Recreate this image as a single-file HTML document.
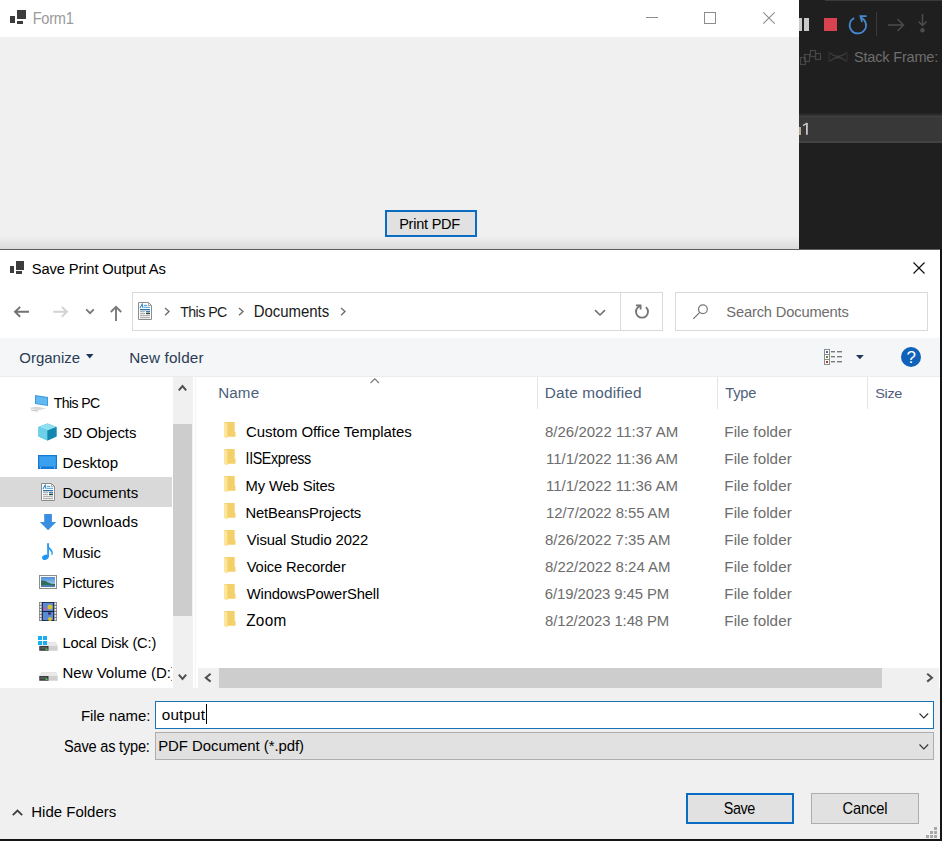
<!DOCTYPE html><html><head><meta charset="utf-8"><style>
html,body{margin:0;padding:0;width:942px;height:841px;overflow:hidden;background:#1e1e1e;}
body{position:relative;font-family:"Liberation Sans",sans-serif;}
.t{position:absolute;white-space:nowrap;line-height:20px;font-family:"Liberation Sans",sans-serif;}
svg{overflow:visible}
</style></head><body>
<div style="position:absolute;left:799px;top:0px;width:143px;height:249px;background:#1f1f1f"></div>
<div style="position:absolute;left:825px;top:0px;width:117px;height:1px;background:#3a3a3a"></div>
<div style="position:absolute;left:799px;top:18px;width:3px;height:13px;background:#c8c8c8"></div>
<div style="position:absolute;left:804px;top:18px;width:5px;height:13px;background:#c8c8c8"></div>
<div style="position:absolute;left:824px;top:18px;width:13px;height:13px;background:#d8434f"></div>
<svg style="position:absolute;left:848px;top:15px" width="20" height="20" viewBox="0 0 20 20"><path d="M12.8 2.6 A8.2 8.2 0 1 1 6.2 2.9" fill="none" stroke="#4489d0" stroke-width="1.7"/><path d="M18.5 1.2 H12.4 L14 7" fill="none" stroke="#4489d0" stroke-width="1.7"/></svg>
<div style="position:absolute;left:876px;top:12px;width:1px;height:24px;background:#3a3a3a"></div>
<svg style="position:absolute;left:886px;top:16px" width="20" height="18" viewBox="0 0 20 18"><path d="M2 9 H17 M11.5 3 L17.5 9 L11.5 15" fill="none" stroke="#4c4c4c" stroke-width="1.5"/></svg>
<svg style="position:absolute;left:914px;top:12px" width="16" height="22" viewBox="0 0 16 22"><path d="M8.5 2 V14 M4.5 9.5 L8.5 13.5 L12.5 9.5" fill="none" stroke="#4c4c4c" stroke-width="1.5"/><circle cx="8.5" cy="18.3" r="2.2" fill="#4c4c4c"/></svg>
<svg style="position:absolute;left:800px;top:48px" width="22" height="18" viewBox="0 0 22 18"><rect x="0.5" y="9.5" width="5" height="7" fill="none" stroke="#454545" stroke-width="1.2"/><rect x="4.5" y="6.5" width="5" height="7" fill="none" stroke="#454545" stroke-width="1.2"/><rect x="10.5" y="2.5" width="5" height="6" fill="none" stroke="#454545" stroke-width="1.2"/><rect x="15.5" y="5.5" width="5" height="6" fill="none" stroke="#454545" stroke-width="1.2"/></svg>
<svg style="position:absolute;left:828px;top:50px" width="20" height="14" viewBox="0 0 20 14"><path d="M2 3 Q10 10 18 3 M2 11 Q10 4 18 11" fill="none" stroke="#3e3e3e" stroke-width="1.3"/><path d="M1 2 L1 12 M19 2 L19 12" stroke="#353535" stroke-width="1"/></svg>
<div class="t" style="left:854.04px;top:46.95px;font-size:14.58px;color:#6e6e6e;letter-spacing:-0.221px;transform:scaleY(1.027);transform-origin:0 15.05px;">Stack Frame:</div>
<div style="position:absolute;left:799px;top:113px;width:143px;height:3px;background:linear-gradient(#222,#353535)"></div>
<div style="position:absolute;left:799px;top:115.5px;width:143px;height:27.5px;background:#424242"></div>
<div style="position:absolute;left:799px;top:117px;width:143px;height:24px;background:#383838"></div>
<svg style="position:absolute;left:802px;top:122px" width="7" height="14" viewBox="0 0 7 14"><path d="M4.9 1 V12.8" stroke="#d0d0d0" stroke-width="1.7"/><path d="M1 3.6 L5.2 1.2" stroke="#c8c8c8" stroke-width="1.4"/></svg>
<div style="position:absolute;left:799px;top:127px;width:2.3px;height:8px;background:#b8ab9a"></div>
<div style="position:absolute;left:0px;top:0px;width:799px;height:249px;background:#f0f0f0;overflow:hidden"></div>
<div style="position:absolute;left:0px;top:0px;width:799px;height:37px;background:#ffffff"></div>
<div style="position:absolute;left:0px;top:236px;width:799px;height:13px;background:linear-gradient(#f0f0f0,#dadada)"></div>
<div style="position:absolute;left:10px;top:15.5px;width:4.5px;height:7.5px;background:#3c3c3c"></div>
<div style="position:absolute;left:17px;top:10px;width:8.5px;height:9px;background:#3c3c3c"></div>
<div style="position:absolute;left:17px;top:20.5px;width:6px;height:3.5px;background:#3c3c3c"></div>
<div class="t" style="left:32.66px;top:8.94px;font-size:14.61px;color:#9a9a9a;letter-spacing:-0.270px;transform:scaleY(1.100);transform-origin:0 15.06px;">Form1</div>
<div style="position:absolute;left:646px;top:17px;width:12px;height:1px;background:#8c8c8c"></div>
<div style="position:absolute;left:704px;top:12px;width:12px;height:12px;border:1px solid #8c8c8c;box-sizing:border-box"></div>
<svg style="position:absolute;left:763px;top:12px" width="12" height="12" viewBox="0 0 12 12"><path d="M0.3 0.3 L11.7 11.7 M11.7 0.3 L0.3 11.7" stroke="#8a8a8a" stroke-width="1.05"/></svg>
<div style="position:absolute;left:385px;top:210px;width:92px;height:27px;background:#e1e1e1;border:2px solid #0a6cc2;box-sizing:border-box"></div>
<div class="t" style="left:399.16px;top:213.96px;font-size:14.54px;color:#000;letter-spacing:-0.240px;transform:scaleY(0.983);transform-origin:0 15.04px;">Print PDF</div>
<div style="position:absolute;left:0px;top:249px;width:942px;height:1px;background:#5f5f5f"></div>
<div style="position:absolute;left:0px;top:250px;width:940px;height:589px;background:#f0f0f0"></div>
<div style="position:absolute;left:940px;top:249px;width:2px;height:592px;background:#151515"></div>
<div style="position:absolute;left:0px;top:839px;width:942px;height:2px;background:#151515"></div>
<div style="position:absolute;left:0px;top:250px;width:940px;height:88px;background:#ffffff"></div>
<div style="position:absolute;left:9.5px;top:265.5px;width:4px;height:7px;background:#3c3c3c"></div>
<div style="position:absolute;left:16px;top:260.5px;width:8.2px;height:9px;background:#3c3c3c"></div>
<div style="position:absolute;left:16px;top:270.5px;width:6px;height:3.3px;background:#3c3c3c"></div>
<div class="t" style="left:31.74px;top:258.69px;font-size:14.73px;color:#000;letter-spacing:-0.130px;transform:scaleY(0.980);transform-origin:0 15.11px;">Save Print Output As</div>
<svg style="position:absolute;left:913px;top:262px" width="12" height="12" viewBox="0 0 12 12"><path d="M0.5 0.5 L11.5 11.5 M11.5 0.5 L0.5 11.5" stroke="#111" stroke-width="1.2"/></svg>
<svg style="position:absolute;left:13px;top:305px" width="17" height="14" viewBox="0 0 17 14"><path d="M16 6.8 H2 M7.2 1.9 L2 6.8 L7.2 11.8" fill="none" stroke="#727272" stroke-width="1.9"/></svg>
<svg style="position:absolute;left:52px;top:305px" width="17" height="14" viewBox="0 0 17 14"><path d="M1.2 6.8 H15 M9.8 1.9 L15 6.8 L9.8 11.8" fill="none" stroke="#d2d2d2" stroke-width="1.9"/></svg>
<svg style="position:absolute;left:85px;top:308px" width="10" height="7" viewBox="0 0 10 7"><path d="M1.2 1.4 L5 5.2 L8.8 1.4" fill="none" stroke="#777" stroke-width="1.8"/></svg>
<svg style="position:absolute;left:109px;top:305px" width="14" height="16" viewBox="0 0 14 16"><path d="M7 2 V16 M1.8 7 L7 1.8 L12.2 7" fill="none" stroke="#7a7a7a" stroke-width="1.9"/></svg>
<div style="position:absolute;left:132px;top:292px;width:531px;height:39px;border:1px solid #d9d9d9;box-sizing:border-box;background:#fff"></div>
<div style="position:absolute;left:620px;top:293px;width:1px;height:37px;background:#d9d9d9"></div>
<svg style="position:absolute;left:138px;top:302px" width="14" height="18" viewBox="0 0 14 18"><path d="M0.5 0.5 H10.5 L13.5 3.5 V17.5 H0.5 Z" fill="#fdfdfd" stroke="#8c8c8c" stroke-width="1"/><path d="M10.5 0.5 V3.5 H13.5" fill="none" stroke="#9a9a9a" stroke-width="0.8"/><path d="M2 6 L4.2 2 L5 6" fill="none" stroke="#2f88cc" stroke-width="1.1"/><rect x="6" y="2.9" width="3.2" height="1" fill="#4aa0d8"/><rect x="6" y="4.8" width="6" height="1" fill="#4aa0d8"/><rect x="2" y="7" width="10" height="1.3" fill="#2a74aa"/><rect x="2" y="9.2" width="5" height="1" fill="#a0a0a0"/><rect x="2" y="11.2" width="5" height="1" fill="#a0a0a0"/><rect x="8" y="9" width="4" height="1.3" fill="#4a78b8"/><rect x="8" y="10.8" width="4" height="1.4" fill="#1e4a30"/><rect x="2" y="13.2" width="10" height="1" fill="#a0a0a0"/><rect x="2" y="15.2" width="10" height="1" fill="#a0a0a0"/></svg>
<svg style="position:absolute;left:164px;top:306.5px" width="7" height="10" viewBox="0 0 7 10"><path d="M1 1 L5 4.6 L1 8.2" fill="none" stroke="#6e6e6e" stroke-width="1.4"/></svg>
<div class="t" style="left:180.18px;top:302.11px;font-size:14.12px;color:#1a1a1a;letter-spacing:-0.516px;transform:scaleY(1.071);transform-origin:0 14.89px;">This PC</div>
<svg style="position:absolute;left:237.5px;top:306.5px" width="7" height="10" viewBox="0 0 7 10"><path d="M1 1 L5 4.6 L1 8.2" fill="none" stroke="#6e6e6e" stroke-width="1.4"/></svg>
<div class="t" style="left:253.63px;top:301.81px;font-size:14.97px;color:#1a1a1a;letter-spacing:-0.020px;transform:scaleY(1.055);transform-origin:0 15.19px;">Documents</div>
<svg style="position:absolute;left:339.5px;top:306.5px" width="7" height="10" viewBox="0 0 7 10"><path d="M1 1 L5 4.6 L1 8.2" fill="none" stroke="#6e6e6e" stroke-width="1.4"/></svg>
<svg style="position:absolute;left:594px;top:309px" width="12" height="8" viewBox="0 0 12 8"><path d="M1 1.2 L6 6 L11 1.2" fill="none" stroke="#6e6e6e" stroke-width="1.6"/></svg>
<svg style="position:absolute;left:634px;top:304px" width="16" height="16" viewBox="0 0 16 16"><path d="M11.9 3.1 A6 6 0 1 1 4.1 3.1 L6.4 1.5" fill="none" stroke="#737373" stroke-width="1.9"/><path d="M2 1.3 H6.6 V5.6" fill="none" stroke="#737373" stroke-width="1.8"/></svg>
<div style="position:absolute;left:675px;top:292px;width:253px;height:39px;border:1px solid #d9d9d9;box-sizing:border-box;background:#fff"></div>
<svg style="position:absolute;left:692px;top:304px" width="16" height="16" viewBox="0 0 16 16"><circle cx="10.9" cy="5.2" r="4.4" fill="none" stroke="#777" stroke-width="1.2"/><path d="M7.7 8.4 L1.3 14.8" stroke="#6a6a6a" stroke-width="1.1"/></svg>
<div class="t" style="left:726.24px;top:301.90px;font-size:14.71px;color:#6d6d6d;letter-spacing:-0.161px;">Search Documents</div>
<div style="position:absolute;left:0px;top:338px;width:940px;height:38px;background:#f5f6f7"></div>
<div style="position:absolute;left:0px;top:376px;width:940px;height:1px;background:#ececec"></div>
<div class="t" style="left:19.30px;top:347.60px;font-size:14.99px;color:#2a3c55;transform:scaleY(0.972);transform-origin:0 15.20px;">Organize</div>
<svg style="position:absolute;left:86px;top:354px" width="8" height="5" viewBox="0 0 8 5"><path d="M0 0 H7.5 L3.75 4.5 Z" fill="#1e3955"/></svg>
<div class="t" style="left:129.21px;top:347.50px;font-size:15.28px;color:#2a3c55;letter-spacing:0.147px;transform:scaleY(0.989);transform-origin:0 15.30px;">New folder</div>
<svg style="position:absolute;left:824px;top:349px" width="18" height="16" viewBox="0 0 18 16"><rect x="0.5" y="0.5" width="5" height="5" fill="#fff" stroke="#8a8a8a"/><rect x="2" y="2" width="2" height="2" fill="#3a6ea5"/><rect x="0.5" y="5.5" width="5" height="5" fill="#fff" stroke="#8a8a8a"/><rect x="2" y="7" width="2" height="2" fill="#5a8a3a"/><rect x="0.5" y="10.5" width="5" height="5" fill="#fff" stroke="#8a8a8a"/><rect x="2" y="12" width="2" height="2" fill="#b03a2a"/><rect x="7" y="2" width="4" height="1.4" fill="#7a7a7a"/><rect x="13" y="2" width="5" height="1.4" fill="#7a7a7a"/><rect x="7" y="7" width="4" height="1.4" fill="#7a7a7a"/><rect x="13" y="7" width="5" height="1.4" fill="#7a7a7a"/><rect x="7" y="12" width="4" height="1.4" fill="#7a7a7a"/><rect x="13" y="12" width="5" height="1.4" fill="#7a7a7a"/></svg>
<svg style="position:absolute;left:855.5px;top:355px" width="8" height="5" viewBox="0 0 8 5"><path d="M0 0 H7.8 L3.9 4.3 Z" fill="#1e3955"/></svg>
<svg style="position:absolute;left:901px;top:347px" width="20" height="20" viewBox="0 0 20 20"><circle cx="10" cy="10" r="10" fill="#1062b8"/><text x="10.2" y="16" text-anchor="middle" font-family="Liberation Sans" font-size="17" fill="#fff">?</text></svg>
<div style="position:absolute;left:0px;top:377px;width:940px;height:311px;background:#fff"></div>
<div style="position:absolute;left:173px;top:377px;width:20px;height:311px;background:#f0f0f0"></div>
<div style="position:absolute;left:173px;top:424px;width:19px;height:192px;background:#cdcdcd"></div>
<svg style="position:absolute;left:178px;top:384px" width="9" height="7" viewBox="0 0 9 7"><path d="M0.8 6.3 L4.5 2 L8.2 6.3" fill="none" stroke="#505050" stroke-width="2"/></svg>
<svg style="position:absolute;left:178px;top:674px" width="9" height="7" viewBox="0 0 9 7"><path d="M0.8 0.7 L4.5 5 L8.2 0.7" fill="none" stroke="#505050" stroke-width="2"/></svg>
<div style="position:absolute;left:195px;top:377px;width:1px;height:311px;background:#f4f4f4"></div>
<div style="position:absolute;left:0px;top:477px;width:172px;height:30px;background:#d9d9d9"></div>
<div style="position:absolute;left:0;top:377px;width:172px;height:311px;overflow:hidden"><div class="t" style="left:53.68px;top:15.94px;font-size:14.03px;color:#000;letter-spacing:-0.566px;transform:scaleY(1.038);transform-origin:0 14.86px;">This PC</div>
<div class="t" style="left:63.23px;top:45.64px;font-size:14.90px;color:#000;letter-spacing:-0.053px;transform:scaleY(0.978);transform-origin:0 15.16px;">3D Objects</div>
<div class="t" style="left:62.52px;top:75.77px;font-size:15.09px;color:#000;letter-spacing:0.054px;transform:scaleY(0.965);transform-origin:0 15.23px;">Desktop</div>
<div class="t" style="left:62.53px;top:105.71px;font-size:14.98px;color:#000;letter-spacing:-0.014px;transform:scaleY(1.016);transform-origin:0 15.19px;">Documents</div>
<div class="t" style="left:62.52px;top:135.45px;font-size:15.15px;color:#000;letter-spacing:0.089px;transform:scaleY(0.962);transform-origin:0 15.25px;">Downloads</div>
<div class="t" style="left:62.54px;top:165.66px;font-size:14.83px;color:#000;letter-spacing:-0.108px;transform:scaleY(0.983);transform-origin:0 15.14px;">Music</div>
<div class="t" style="left:62.56px;top:195.94px;font-size:14.61px;color:#000;letter-spacing:-0.196px;">Pictures</div>
<div class="t" style="left:63.70px;top:225.86px;font-size:14.83px;color:#000;letter-spacing:-0.102px;transform:scaleY(0.983);transform-origin:0 15.14px;">Videos</div>
<div class="t" style="left:62.56px;top:255.92px;font-size:14.65px;color:#000;letter-spacing:-0.161px;">Local Disk (C:)</div>
<div class="t" style="left:62.53px;top:285.80px;font-size:15.00px;color:#000;transform:scaleY(0.971);transform-origin:0 15.20px;">New Volume (D:)</div>
</div>
<svg style="position:absolute;left:28px;top:394px" width="21" height="18" viewBox="0 0 21 18"><path d="M7 1 L20 3 V12 L7 10 Z" fill="#3d9ae0"/><path d="M8 2.2 L19 4 V11 L8 9.2 Z" fill="#62b8f0"/><path d="M1 14 L9 12.5 L18 14.5 L10 16.5 Z" fill="#d8d8d8"/><path d="M3 16 L10 17.2" stroke="#c0c0c0" stroke-width="1"/></svg>
<svg style="position:absolute;left:38px;top:423px" width="19" height="18" viewBox="0 0 19 18"><path d="M9.5 0.5 L18.5 4 V13.5 L9.5 17.5 L0.5 13.5 V4 Z" fill="#2aa5c8"/><path d="M9.5 0.5 L18.5 4 L9.5 7.5 L0.5 4 Z" fill="#8fe0f0"/><path d="M0.5 4 L9.5 7.5 V17.5 L0.5 13.5 Z" fill="#6cd0e8"/><path d="M9.5 7.5 L18.5 4 V13.5 L9.5 17.5 Z" fill="#1387b0"/></svg>
<svg style="position:absolute;left:38px;top:455px" width="19" height="14" viewBox="0 0 19 14"><rect x="0" y="0" width="19" height="14" fill="#1478d4"/><rect x="1.2" y="1.2" width="16.6" height="10.4" fill="#3aa0f0"/><rect x="2" y="12.2" width="1" height="1" fill="#cfe6fa"/><rect x="16" y="12.2" width="1" height="1" fill="#cfe6fa"/></svg>
<svg style="position:absolute;left:41px;top:483px" width="15" height="18" viewBox="0 0 15 18"><path d="M0.5 0.5 H10.5 L13.5 3.5 V17.5 H0.5 Z" fill="#fdfdfd" stroke="#8c8c8c" stroke-width="1"/><path d="M10.5 0.5 V3.5 H13.5" fill="none" stroke="#9a9a9a" stroke-width="0.8"/><path d="M2 6 L4.2 2 L5 6" fill="none" stroke="#2f88cc" stroke-width="1.1"/><rect x="6" y="2.9" width="3.2" height="1" fill="#4aa0d8"/><rect x="6" y="4.8" width="6" height="1" fill="#4aa0d8"/><rect x="2" y="7" width="10" height="1.3" fill="#2a74aa"/><rect x="2" y="9.2" width="5" height="1" fill="#a0a0a0"/><rect x="2" y="11.2" width="5" height="1" fill="#a0a0a0"/><rect x="8" y="9" width="4" height="1.3" fill="#4a78b8"/><rect x="8" y="10.8" width="4" height="1.4" fill="#1e4a30"/><rect x="2" y="13.2" width="10" height="1" fill="#a0a0a0"/><rect x="2" y="15.2" width="10" height="1" fill="#a0a0a0"/></svg>
<svg style="position:absolute;left:39px;top:513px" width="18" height="18" viewBox="0 0 18 18"><path d="M5.2 1 H12.9 V9 H17.2 L9.05 17.2 L0.9 9 H5.2 Z" fill="#3a8ee0"/></svg>
<svg style="position:absolute;left:41px;top:543px" width="13" height="18" viewBox="0 0 13 18"><rect x="6.2" y="0.2" width="1.7" height="14" fill="#2196f0"/><ellipse cx="4.3" cy="14.3" rx="3.3" ry="2.5" transform="rotate(-20 4.3 14.3)" fill="#2196f0"/><path d="M6.5 0.2 Q7.5 4 10.5 6.5 Q12.6 8.8 11.3 12.2 L10.4 11.8 Q11 9.3 9.3 7.8 Q7.3 6 6.5 3.5 Z" fill="#2196f0"/></svg>
<svg style="position:absolute;left:39px;top:575px" width="18" height="14" viewBox="0 0 18 14"><rect x="0.5" y="0.5" width="17" height="13" fill="#fafafa" stroke="#8c8c8c"/><defs><linearGradient id="sky" x1="0" y1="0" x2="0" y2="1"><stop offset="0" stop-color="#4f8fd8"/><stop offset="1" stop-color="#b8dcf0"/></linearGradient></defs><rect x="2" y="2" width="14" height="10" fill="url(#sky)"/><path d="M2 5.5 Q6 5 9 7.5 Q12 9 16 9 V12 H2 Z" fill="#2f6a5a"/><path d="M2 10 Q9 9.5 16 10.5 V12 H2Z" fill="#4a80a8"/></svg>
<svg style="position:absolute;left:39px;top:602px" width="18" height="19" viewBox="0 0 18 19"><rect x="0" y="0" width="18" height="19" fill="#808080"/><rect x="3" y="0" width="12" height="19" fill="#142238"/><rect x="3.8" y="0.8" width="10.4" height="8.2" fill="#5a8ad6"/><rect x="3.8" y="10" width="10.4" height="8.2" fill="#5a8ad6"/><circle cx="11" cy="5" r="2.5" fill="#d8c030"/><rect x="4.5" y="5.5" width="3" height="2.5" fill="#c060a0"/><circle cx="11" cy="17" r="2" fill="#d8c030"/><rect x="9" y="10.5" width="3" height="2" fill="#402060"/><rect x="0.8" y="0.90" width="1.6" height="1.8" fill="#f4f4f4"/><rect x="15.6" y="0.90" width="1.6" height="1.8" fill="#f4f4f4"/><rect x="0.8" y="3.95" width="1.6" height="1.8" fill="#f4f4f4"/><rect x="15.6" y="3.95" width="1.6" height="1.8" fill="#f4f4f4"/><rect x="0.8" y="7.00" width="1.6" height="1.8" fill="#f4f4f4"/><rect x="15.6" y="7.00" width="1.6" height="1.8" fill="#f4f4f4"/><rect x="0.8" y="10.05" width="1.6" height="1.8" fill="#f4f4f4"/><rect x="15.6" y="10.05" width="1.6" height="1.8" fill="#f4f4f4"/><rect x="0.8" y="13.10" width="1.6" height="1.8" fill="#f4f4f4"/><rect x="15.6" y="13.10" width="1.6" height="1.8" fill="#f4f4f4"/><rect x="0.8" y="16.15" width="1.6" height="1.8" fill="#f4f4f4"/><rect x="15.6" y="16.15" width="1.6" height="1.8" fill="#f4f4f4"/></svg>
<svg style="position:absolute;left:39px;top:641.5px" width="19" height="9" viewBox="0 0 19 9"><path d="M2.5 0.3 H17 L18.7 4 V8.7 H0.3 V4 Z" fill="#d0d0d0"/><path d="M2.5 0.3 H17 L18.7 4 H0.3 Z" fill="#e9e9e9"/><path d="M0.3 4 H9.5 V8.7 H0.3 Z" fill="#3a3a3a"/><rect x="1.3" y="5" width="6.8" height="2.2" fill="#5a5a5a"/><rect x="6.6" y="6.6" width="2" height="1.4" fill="#3ccf5a"/></svg>
<svg style="position:absolute;left:38px;top:636px" width="9" height="9" viewBox="0 0 9 9"><rect x="0" y="0" width="4" height="4" fill="#19aef0"/><rect x="5" y="0" width="4" height="4" fill="#19aef0"/><rect x="0" y="5" width="4" height="4" fill="#19aef0"/><rect x="5" y="5" width="4" height="4" fill="#19aef0"/></svg>
<svg style="position:absolute;left:39px;top:671.5px" width="19" height="9" viewBox="0 0 19 9"><path d="M2.5 0.3 H17 L18.7 4 V8.7 H0.3 V4 Z" fill="#d0d0d0"/><path d="M2.5 0.3 H17 L18.7 4 H0.3 Z" fill="#e9e9e9"/><path d="M0.3 4 H9.5 V8.7 H0.3 Z" fill="#3a3a3a"/><rect x="1.3" y="5" width="6.8" height="2.2" fill="#5a5a5a"/><rect x="6.6" y="6.6" width="2" height="1.4" fill="#3ccf5a"/></svg>
<div class="t" style="left:218.21px;top:383.24px;font-size:15.17px;color:#4c607a;letter-spacing:0.145px;transform:scaleY(0.928);transform-origin:0 15.26px;">Name</div>
<svg style="position:absolute;left:370px;top:378px" width="10" height="6" viewBox="0 0 10 6"><path d="M0.5 5 L4.8 0.8 L9 5" fill="none" stroke="#777" stroke-width="1.1"/></svg>
<div style="position:absolute;left:537px;top:377px;width:1px;height:32px;background:#e5e5e5"></div>
<div style="position:absolute;left:717px;top:377px;width:1px;height:32px;background:#e5e5e5"></div>
<div style="position:absolute;left:867px;top:377px;width:1px;height:32px;background:#e5e5e5"></div>
<div class="t" style="left:544.80px;top:383.18px;font-size:15.35px;color:#4c607a;letter-spacing:0.178px;transform:scaleY(0.900);transform-origin:0 15.32px;">Date modified</div>
<div class="t" style="left:725.37px;top:383.42px;font-size:14.65px;color:#4c607a;letter-spacing:-0.246px;transform:scaleY(0.961);transform-origin:0 15.08px;">Type</div>
<div class="t" style="left:875.15px;top:383.48px;font-size:14.49px;color:#4c607a;letter-spacing:-0.317px;transform:scaleY(0.930);transform-origin:0 15.02px;">Size</div>
<svg style="position:absolute;left:224.2px;top:422px" width="12" height="17" viewBox="0 0 12 17"><path d="M0 0 H10.7 V10 H11.5 V14.8 H3.4 V16.3 L0 14.8 Z" fill="#f3d06a"/><path d="M0 0 L3.4 1.3 V16.3 L0 14.8 Z" fill="#fce59c"/></svg>
<div class="t" style="left:246.00px;top:421.72px;font-size:14.95px;color:#000;letter-spacing:-0.028px;transform:scaleY(1.011);transform-origin:0 15.18px;">Custom Office Templates</div>
<div class="t" style="left:545.03px;top:421.70px;font-size:15.00px;color:#6d6d6d;">8/26/2022 11:37 AM</div>
<div class="t" style="left:724.31px;top:421.64px;font-size:15.18px;color:#6d6d6d;letter-spacing:0.079px;">File folder</div>
<svg style="position:absolute;left:224.2px;top:449px" width="12" height="17" viewBox="0 0 12 17"><path d="M0 0 H10.7 V10 H11.5 V14.8 H3.4 V16.3 L0 14.8 Z" fill="#f3d06a"/><path d="M0 0 L3.4 1.3 V16.3 L0 14.8 Z" fill="#fce59c"/></svg>
<div class="t" style="left:245.59px;top:448.95px;font-size:14.27px;color:#000;letter-spacing:-0.382px;transform:scaleY(1.106);transform-origin:0 14.95px;">IISExpress</div>
<div class="t" style="left:545.96px;top:448.70px;font-size:15.01px;color:#6d6d6d;">11/1/2022 11:36 AM</div>
<div class="t" style="left:724.31px;top:448.64px;font-size:15.18px;color:#6d6d6d;letter-spacing:0.079px;">File folder</div>
<svg style="position:absolute;left:224.2px;top:476px" width="12" height="17" viewBox="0 0 12 17"><path d="M0 0 H10.7 V10 H11.5 V14.8 H3.4 V16.3 L0 14.8 Z" fill="#f3d06a"/><path d="M0 0 L3.4 1.3 V16.3 L0 14.8 Z" fill="#fce59c"/></svg>
<div class="t" style="left:245.55px;top:475.78px;font-size:14.78px;color:#000;letter-spacing:-0.123px;transform:scaleY(1.023);transform-origin:0 15.12px;">My Web Sites</div>
<div class="t" style="left:545.96px;top:475.70px;font-size:15.01px;color:#6d6d6d;">11/1/2022 11:36 AM</div>
<div class="t" style="left:724.31px;top:475.64px;font-size:15.18px;color:#6d6d6d;letter-spacing:0.079px;">File folder</div>
<svg style="position:absolute;left:224.2px;top:503px" width="12" height="17" viewBox="0 0 12 17"><path d="M0 0 H10.7 V10 H11.5 V14.8 H3.4 V16.3 L0 14.8 Z" fill="#f3d06a"/><path d="M0 0 L3.4 1.3 V16.3 L0 14.8 Z" fill="#fce59c"/></svg>
<div class="t" style="left:245.55px;top:502.80px;font-size:14.73px;color:#000;letter-spacing:-0.144px;transform:scaleY(1.026);transform-origin:0 15.10px;">NetBeansProjects</div>
<div class="t" style="left:545.97px;top:502.74px;font-size:14.88px;color:#6d6d6d;letter-spacing:-0.063px;transform:scaleY(1.016);transform-origin:0 15.16px;">12/7/2022 8:55 AM</div>
<div class="t" style="left:724.31px;top:502.64px;font-size:15.18px;color:#6d6d6d;letter-spacing:0.079px;">File folder</div>
<svg style="position:absolute;left:224.2px;top:530px" width="12" height="17" viewBox="0 0 12 17"><path d="M0 0 H10.7 V10 H11.5 V14.8 H3.4 V16.3 L0 14.8 Z" fill="#f3d06a"/><path d="M0 0 L3.4 1.3 V16.3 L0 14.8 Z" fill="#fce59c"/></svg>
<div class="t" style="left:246.70px;top:529.77px;font-size:14.81px;color:#000;letter-spacing:-0.094px;transform:scaleY(1.021);transform-origin:0 15.13px;">Visual Studio 2022</div>
<div class="t" style="left:545.03px;top:529.71px;font-size:14.97px;color:#6d6d6d;letter-spacing:-0.015px;">8/26/2022 7:35 AM</div>
<div class="t" style="left:724.31px;top:529.64px;font-size:15.18px;color:#6d6d6d;letter-spacing:0.079px;">File folder</div>
<svg style="position:absolute;left:224.2px;top:557px" width="12" height="17" viewBox="0 0 12 17"><path d="M0 0 H10.7 V10 H11.5 V14.8 H3.4 V16.3 L0 14.8 Z" fill="#f3d06a"/><path d="M0 0 L3.4 1.3 V16.3 L0 14.8 Z" fill="#fce59c"/></svg>
<div class="t" style="left:246.70px;top:556.79px;font-size:14.75px;color:#000;letter-spacing:-0.134px;transform:scaleY(1.025);transform-origin:0 15.11px;">Voice Recorder</div>
<div class="t" style="left:545.03px;top:556.71px;font-size:14.97px;color:#6d6d6d;letter-spacing:-0.015px;">8/22/2022 8:24 AM</div>
<div class="t" style="left:724.31px;top:556.64px;font-size:15.18px;color:#6d6d6d;letter-spacing:0.079px;">File folder</div>
<svg style="position:absolute;left:224.2px;top:584px" width="12" height="17" viewBox="0 0 12 17"><path d="M0 0 H10.7 V10 H11.5 V14.8 H3.4 V16.3 L0 14.8 Z" fill="#f3d06a"/><path d="M0 0 L3.4 1.3 V16.3 L0 14.8 Z" fill="#fce59c"/></svg>
<div class="t" style="left:246.70px;top:583.78px;font-size:14.78px;color:#000;letter-spacing:-0.123px;transform:scaleY(1.022);transform-origin:0 15.12px;">WindowsPowerShell</div>
<div class="t" style="left:544.80px;top:583.75px;font-size:14.87px;color:#6d6d6d;letter-spacing:-0.070px;transform:scaleY(1.017);transform-origin:0 15.15px;">6/19/2023 9:45 PM</div>
<div class="t" style="left:724.31px;top:583.64px;font-size:15.18px;color:#6d6d6d;letter-spacing:0.079px;">File folder</div>
<svg style="position:absolute;left:224.2px;top:611px" width="12" height="17" viewBox="0 0 12 17"><path d="M0 0 H10.7 V10 H11.5 V14.8 H3.4 V16.3 L0 14.8 Z" fill="#f3d06a"/><path d="M0 0 L3.4 1.3 V16.3 L0 14.8 Z" fill="#fce59c"/></svg>
<div class="t" style="left:246.22px;top:610.58px;font-size:15.34px;color:#000;letter-spacing:0.284px;transform:scaleY(1.029);transform-origin:0 15.32px;">Zoom</div>
<div class="t" style="left:545.04px;top:610.75px;font-size:14.85px;color:#6d6d6d;letter-spacing:-0.078px;transform:scaleY(1.018);transform-origin:0 15.15px;">8/12/2023 1:48 PM</div>
<div class="t" style="left:724.31px;top:610.64px;font-size:15.18px;color:#6d6d6d;letter-spacing:0.079px;">File folder</div>
<div style="position:absolute;left:198px;top:668px;width:741px;height:20px;background:#f0f0f0"></div>
<div style="position:absolute;left:219px;top:668px;width:663px;height:20px;background:#cdcdcd"></div>
<svg style="position:absolute;left:204px;top:673px" width="8" height="10" viewBox="0 0 8 10"><path d="M6.6 0.8 L1.8 4.7 L6.6 8.6" fill="none" stroke="#505050" stroke-width="2"/></svg>
<svg style="position:absolute;left:926px;top:673px" width="8" height="10" viewBox="0 0 8 10"><path d="M1.2 0.8 L6 4.7 L1.2 8.6" fill="none" stroke="#505050" stroke-width="2"/></svg>
<div class="t" style="left:80.93px;top:706.03px;font-size:14.93px;color:#000;letter-spacing:-0.033px;">File name:</div>
<div style="position:absolute;left:155px;top:701px;width:779px;height:28px;background:#fff;border:1px solid #1872b8;box-sizing:border-box"></div>
<div class="t" style="left:161.82px;top:704.71px;font-size:15.26px;color:#000;letter-spacing:0.141px;">output</div>
<div style="position:absolute;left:206px;top:704px;width:1px;height:20px;background:#000"></div>
<svg style="position:absolute;left:919px;top:712.5px" width="10" height="6" viewBox="0 0 10 6"><path d="M0.5 0.5 L4.8 5 L9.2 0.5" fill="none" stroke="#333" stroke-width="1.1"/></svg>
<div class="t" style="left:64.04px;top:736.95px;font-size:14.58px;color:#000;letter-spacing:-0.207px;transform:scaleY(1.092);transform-origin:0 15.05px;">Save as type:</div>
<div style="position:absolute;left:155px;top:732px;width:779px;height:28px;background:#e1e1e1;border:1px solid #adadad;box-sizing:border-box"></div>
<div class="t" style="left:158.23px;top:736.23px;font-size:14.92px;color:#000;letter-spacing:-0.042px;transform:scaleY(1.041);transform-origin:0 15.17px;">PDF Document (*.pdf)</div>
<svg style="position:absolute;left:919px;top:743.5px" width="10" height="6" viewBox="0 0 10 6"><path d="M0.5 0.5 L4.8 5 L9.2 0.5" fill="none" stroke="#333" stroke-width="1.1"/></svg>
<svg style="position:absolute;left:12px;top:809px" width="11" height="7" viewBox="0 0 11 7"><path d="M0.8 6.2 L5.5 1.5 L10.2 6.2" fill="none" stroke="#404040" stroke-width="1.8"/></svg>
<div class="t" style="left:31.23px;top:802.30px;font-size:15.01px;color:#000;transform:scaleY(0.934);transform-origin:0 15.20px;">Hide Folders</div>
<div style="position:absolute;left:686px;top:793px;width:108px;height:31px;background:#e1e1e1;border:2px solid #0a6cc2;box-sizing:border-box"></div>
<div class="t" style="left:723.85px;top:799.02px;font-size:14.36px;color:#000;letter-spacing:-0.469px;transform:scaleY(1.120);transform-origin:0 14.98px;">Save</div>
<div style="position:absolute;left:811px;top:793px;width:108px;height:31px;background:#e1e1e1;border:1px solid #adadad;box-sizing:border-box"></div>
<div class="t" style="left:842.61px;top:798.90px;font-size:14.72px;color:#000;letter-spacing:-0.170px;transform:scaleY(1.064);transform-origin:0 15.10px;">Cancel</div>
<div style="position:absolute;left:934px;top:827px;width:3px;height:3px;background:#a8a8a8"></div>
<div style="position:absolute;left:930px;top:831px;width:3px;height:3px;background:#a8a8a8"></div>
<div style="position:absolute;left:934px;top:831px;width:3px;height:3px;background:#a8a8a8"></div>
<div style="position:absolute;left:926px;top:835px;width:3px;height:3px;background:#a8a8a8"></div>
<div style="position:absolute;left:930px;top:835px;width:3px;height:3px;background:#a8a8a8"></div>
<div style="position:absolute;left:934px;top:835px;width:3px;height:3px;background:#a8a8a8"></div>
</body></html>
